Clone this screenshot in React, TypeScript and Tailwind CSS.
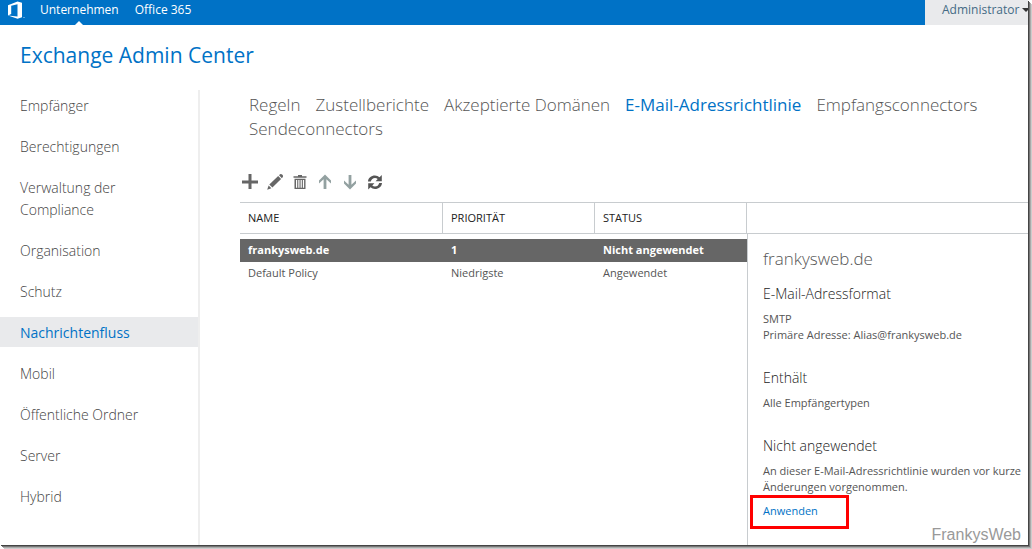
import React, { useState } from 'react';

const topLinks = ['Unternehmen', 'Office 365'];

const navItems = [
  'Empfänger',
  'Berechtigungen',
  'Verwaltung der Compliance',
  'Organisation',
  'Schutz',
  'Nachrichtenfluss',
  'Mobil',
  'Öffentliche Ordner',
  'Server',
  'Hybrid',
];

const tabs = [
  'Regeln',
  'Zustellberichte',
  'Akzeptierte Domänen',
  'E-Mail-Adressrichtlinie',
  'Empfangsconnectors',
  'Sendeconnectors',
];

const policies = [
  { name: 'frankysweb.de', priority: '1', status: 'Nicht angewendet' },
  { name: 'Default Policy', priority: 'Niedrigste', status: 'Angewendet' },
];

const OfficeLogo = () => (
  <svg viewBox="0 0 18 20" className="h-5 w-[18px]" fill="#fff">
    <path fillRule="evenodd" d="M1 5.200 10.500 1.600 15 2.800V17.200L10.500 18.800 1 15.400 10.500 16.400V4.200L4.200 5.800V14L1 15.400Z" />
    <path d="M16.500 17h1v1h-1z" opacity=".7" />
  </svg>
);

const tools = [
  {
    label: 'Neu',
    color: 'text-[#666]',
    icon: <path d="M6.500 0h3v6.500H16v3H9.500V15h-3V9.500H0v-3h6.500z" />,
  },
  {
    label: 'Bearbeiten',
    color: 'text-[#666]',
    icon: (
      <>
        <path d="M12 1.200 13 .3q1.200-.6 2.400.4 1 1.200.4 2.400L14.900 4.200z" />
        <path d="M11.200 2 14.100 5 5.400 13.500 2.300 10.500z" />
        <path d="M1.600 11.400 4.400 14.300.2 15.800z" />
      </>
    ),
  },
  {
    label: 'Löschen',
    color: 'text-[#666]',
    icon: (
      <>
        <path d="M6 1h4v1.300h4.500v1.500h-13V2.300H6z" />
        <path fillRule="evenodd" d="M2.500 4.800h11V15h-11zM4 6v7.700h1.200V6zm2.300 0v7.700h1.200V6zm2.300 0v7.700h1.200V6zm2.300 0v7.700h1.200V6z" />
      </>
    ),
  },
  {
    label: 'Nach oben',
    color: 'text-[#93a1a1]',
    icon: <path d="M8 .5 14 6.500v3L9.400 5.300V15H6.600V5.300L2 9.500v-3z" />,
  },
  {
    label: 'Nach unten',
    color: 'text-[#93a1a1]',
    icon: <path d="M8 15.500 14 9.500v-3L9.400 10.700V1H6.600v9.700L2 6.500v3z" />,
  },
  {
    label: 'Aktualisieren',
    color: 'text-[#555]',
    icon: (
      <>
        <path d="M1 7.500C1.200 4 4.200 1.500 8 1.500q2.600 0 4.500 1.700L14.800 1v6.200H8.600l2.100-2.200Q9.600 4 8 4 4.800 4 3.800 7.500z" />
        <path d="M15 9C14.800 12.500 11.800 15 8 15q-2.600 0-4.500-1.700L1.200 15.500V9.300h6.200l-2.100 2.200q1.100 1 2.700 1 3.200 0 4.200-3.500z" />
      </>
    ),
  },
];

const Section = ({ title, children }: { title: string; children: React.ReactNode }) => (
  <section className="mb-[25px]">
    <h3 className="mb-[7px] text-sm leading-5 font-light text-[#222]">{title}</h3>
    <div className="text-[11px] leading-4 whitespace-nowrap">{children}</div>
  </section>
);

export default function App() {
  const [activeNav, setActiveNav] = useState('Nachrichtenfluss');
  const [activeTab, setActiveTab] = useState('E-Mail-Adressrichtlinie');
  const [selected, setSelected] = useState(0);

  return (
    <div className="h-screen overflow-hidden bg-white pr-1 pb-1 font-['Open_Sans','Noto_Sans',sans-serif] text-[#555]">
      <div className="relative flex h-full flex-col overflow-hidden bg-white shadow-[1px_1px_0_#444,2px_2px_0_#777,3px_3px_0_#aaa,4px_4px_0_#ccc]">
        {/* Top bar */}
        <header className="flex h-[25px] shrink-0 bg-[#0072c6]">
          <div className="flex pl-[7px]">
            <OfficeLogo />
          </div>
          <nav className="ml-[15px] flex flex-1 gap-4">
            {topLinks.map((link, i) => (
              <a key={link} href="#" className="relative text-xs leading-5 text-white">
                {link}
                {i === 0 && (
                  <span className="absolute bottom-0 left-1/2 -ml-1 border-x-4 border-b-4 border-x-transparent border-b-white"></span>
                )}
              </a>
            ))}
          </nav>
          <button className="flex w-[103px] items-start overflow-hidden bg-[#e9eaec] pl-[17px] text-xs leading-5 whitespace-nowrap text-[#446a85]">
            Administrator
            <span className="mt-2 ml-[3px] shrink-0 border-x-4 border-t-4 border-x-transparent border-t-[#333]"></span>
          </button>
        </header>

        <h1 className="h-[65px] shrink-0 pt-[14px] pl-5 text-[21px] leading-8 text-[#0072c6]">Exchange Admin Center</h1>

        <div className="flex min-h-0 flex-1">
          {/* Sidebar */}
          <nav className="flex w-[200px] shrink-0 flex-col gap-[11px] border-r-2 border-[#eee]">
            {navItems.map((item) => (
              <a
                key={item}
                href="#"
                onClick={() => setActiveNav(item)}
                className={`pt-[5px] pr-10 pb-[3px] pl-5 text-sm leading-[22px] ${
                  item === activeNav ? 'bg-[#e9eaec] text-[#0072c6]' : 'font-light text-[#444]'
                }`}
              >
                {item}
              </a>
            ))}
          </nav>

          {/* Content */}
          <main className="flex min-w-0 flex-1 flex-col pl-10">
            <div className="flex flex-wrap gap-x-[15px] pt-[3px] pr-4 pl-[9px]">
              {tabs.map((tab) => (
                <button
                  key={tab}
                  onClick={() => setActiveTab(tab)}
                  className={`text-[17px] leading-6 ${tab === activeTab ? 'text-[#0072c6]' : 'font-light text-[#555]'}`}
                >
                  {tab}
                </button>
              ))}
            </div>

            <div className="mt-[33px] mb-3 flex gap-[9px] pl-[2px]">
              {tools.map((tool) => (
                <button key={tool.label} aria-label={tool.label} className={tool.color}>
                  <svg viewBox="0 0 16 16" className="size-4" fill="currentColor">
                    {tool.icon}
                  </svg>
                </button>
              ))}
            </div>

            <div className="flex min-h-0 flex-1">
              <div className="w-[507px] shrink-0">
                <table className="w-full table-fixed border-separate border-spacing-0 text-left text-[11px]">
                  <thead>
                    <tr className="h-8 text-[#222]">
                      <th className="w-[203px] border-y border-r border-[#c8cccf] pl-2 font-normal">NAME</th>
                      <th className="w-[152px] border-y border-r border-[#c8cccf] pl-2 font-normal">PRIORITÄT</th>
                      <th className="border-y border-r border-[#c8cccf] pl-2 font-normal">STATUS</th>
                    </tr>
                  </thead>
                  <tbody>
                    <tr className="h-[5px]"></tr>
                    {policies.map((policy, i) => (
                      <tr
                        key={policy.name}
                        onClick={() => setSelected(i)}
                        className={`h-[23px] ${i === selected ? 'bg-[#666] font-bold text-white' : ''}`}
                      >
                        <td className="pl-2">{policy.name}</td>
                        <td className="pl-2">{policy.priority}</td>
                        <td className="pl-2">{policy.status}</td>
                      </tr>
                    ))}
                  </tbody>
                </table>
              </div>

              {/* Details */}
              <aside className="flex min-w-0 flex-1 flex-col">
                <div className="h-8 shrink-0 border-y border-[#c8cccf]"></div>
                <div className="flex-1 border-l border-[#c8cccf] pt-[11px] pl-[15px]">
                  <h2 className="mb-[11px] text-[17px] leading-7 font-light">frankysweb.de</h2>
                  <Section title="E-Mail-Adressformat">
                    <p>SMTP</p>
                    <p>Primäre Adresse: Alias@frankysweb.de</p>
                  </Section>
                  <Section title="Enthält">
                    <p>Alle Empfängertypen</p>
                  </Section>
                  <Section title="Nicht angewendet">
                    <p>
                      An dieser E-Mail-Adressrichtlinie wurden vor kurze
                      <br />
                      Änderungen vorgenommen.
                    </p>
                    <a href="#" className="relative mt-2 inline-block text-[#0072c6]">
                      Anwenden
                      <span className="absolute -top-2 -left-[13px] h-[34px] w-[99px] border-3 border-[#f00]"></span>
                    </a>
                  </Section>
                </div>
              </aside>
            </div>
          </main>
        </div>

        <span className="absolute right-[7px] bottom-0 font-['Liberation_Sans',sans-serif] text-base leading-5 text-[#999]">
          FrankysWeb
        </span>
      </div>
    </div>
  );
}
